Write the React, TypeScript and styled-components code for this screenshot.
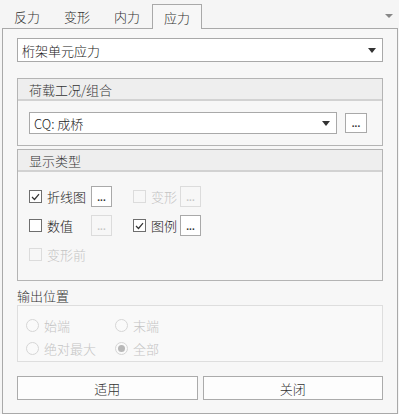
import styled, { createGlobalStyle } from 'styled-components'

const GlobalStyle = createGlobalStyle`
  html, body {
    margin: 0;
    padding: 0;
    background: #f5f5f5;
  }
  body {
    font-family: "Noto Sans CJK SC", "Noto Sans", sans-serif;
    font-size: 13px;
    font-weight: 300;
    color: #333;
  }
`

const Window = styled.div`
  width: 399px;
  height: 414px;
  background: #f5f5f5;
  display: flex;
  flex-direction: column;
  overflow: hidden;
`

const TabBar = styled.div`
  height: 28px;
  display: flex;
  align-items: flex-end;
  padding-left: 2px;
  position: relative;
`

const Tab = styled.div<{ $active?: boolean }>`
  width: 50px;
  height: ${({ $active }) => ($active ? '25px' : '24px')};
  box-sizing: border-box;
  display: flex;
  align-items: center;
  justify-content: center;
  font-size: 13px;
  color: #333;
  margin-bottom: ${({ $active }) => ($active ? '-1px' : '0')};
  background: ${({ $active }) => ($active ? '#f7f7f7' : 'transparent')};
  border: 1px solid ${({ $active }) => ($active ? '#a9a9a9' : 'transparent')};
  border-bottom: none;
  position: relative;
  z-index: 1;
`

const TabMenu = styled.div`
  position: absolute;
  right: 6px;
  top: 14px;
  width: 0;
  height: 0;
  border-left: 4px solid transparent;
  border-right: 4px solid transparent;
  border-top: 4px solid #888;
`

const Panel = styled.div`
  flex: 1;
  margin-left: 2px;
  width: 396px;
  box-sizing: border-box;
  border: 1px solid #a9a9a9;
  background: #f7f7f7;
  padding: 9px 14px;
  display: flex;
  flex-direction: column;
`

const Combo = styled.div<{ $h?: number }>`
  height: ${({ $h }) => $h ?? 24}px;
  box-sizing: border-box;
  border: 1px solid #a9a9a9;
  background: #fff;
  display: flex;
  align-items: center;
  padding: 0 6px 0 4px;
  flex: 1;
`

const ComboText = styled.span`
  flex: 1;
  color: #222;
`

const Caret = styled.span`
  width: 0;
  height: 0;
  border-left: 4px solid transparent;
  border-right: 4px solid transparent;
  border-top: 5px solid #333;
`

const Group = styled.div<{ $top: number }>`
  margin-top: ${({ $top }) => $top}px;
  border: 1px solid #b4b4b4;
  background: #f7f7f7;
`

const GroupHeader = styled.div`
  height: 20px;
  background: #eeeeee;
  border-bottom: 2px solid #d2d2d2;
  display: flex;
  align-items: center;
  padding-left: 11px;
  color: #333;
`

const GroupBody = styled.div<{ $pad: string }>`
  padding: ${({ $pad }) => $pad};
`

const ComboRow = styled.div`
  display: flex;
  align-items: center;
  gap: 8px;
`

const MoreButton = styled.div<{ $w?: number; $h?: number; $disabled?: boolean }>`
  width: ${({ $w }) => $w ?? 21}px;
  height: ${({ $h }) => $h ?? 21}px;
  box-sizing: border-box;
  border: 1px solid ${({ $disabled }) => ($disabled ? '#dcdcdc' : '#a9a9a9')};
  background: ${({ $disabled }) => ($disabled ? '#f7f7f7' : '#fff')};
  color: ${({ $disabled }) => ($disabled ? '#c8c8c8' : '#333')};
  display: flex;
  align-items: center;
  justify-content: center;
  font-family: "Liberation Sans", sans-serif;
  font-size: 10px;
  font-weight: bold;
  line-height: 1;
  padding-top: 2px;
  flex: none;
`

const OptionGrid = styled.div`
  display: grid;
  grid-template-columns: 62px 42px 47px auto;
  grid-auto-rows: 21px;
  row-gap: 8px;
  align-items: center;
`

const Check = styled.label<{ $disabled?: boolean }>`
  display: flex;
  align-items: center;
  gap: 5px;
  color: ${({ $disabled }) => ($disabled ? '#c4c4c4' : '#222')};
  white-space: nowrap;
`

const Box = styled.span<{ $disabled?: boolean }>`
  width: 13px;
  height: 13px;
  box-sizing: border-box;
  border: 1px solid ${({ $disabled }) => ($disabled ? '#dcdcdc' : '#6e6e6e')};
  background: ${({ $disabled }) => ($disabled ? '#f7f7f7' : '#fff')};
  display: flex;
  align-items: center;
  justify-content: center;
  flex: none;
`

const SectionLabel = styled.div`
  margin-top: 5px;
  height: 18px;
  display: flex;
  align-items: center;
  color: #333;
`

const RadioGroup = styled.div`
  margin-top: 1px;
  border: 1px solid #dedede;
  background: #f9f9f9;
  padding: 12px 8px 5px;
  display: grid;
  grid-template-columns: 89px auto;
  grid-auto-rows: 15px;
  row-gap: 8px;
  align-items: center;
`

const Radio = styled.span`
  display: flex;
  align-items: center;
  gap: 5px;
  color: #c4c4c4;
`

const Circle = styled.span<{ $checked?: boolean }>`
  width: 13px;
  height: 13px;
  box-sizing: border-box;
  border-radius: 50%;
  border: 1px solid #d6d6d6;
  background: #fafafa;
  display: flex;
  align-items: center;
  justify-content: center;
  &::after {
    content: '';
    display: ${({ $checked }) => ($checked ? 'block' : 'none')};
    width: 7px;
    height: 7px;
    border-radius: 50%;
    background: #b8b8b8;
  }
`

const ButtonRow = styled.div`
  margin-top: 14px;
  display: grid;
  grid-template-columns: 1fr 1fr;
  column-gap: 5px;
`

const Button = styled.div`
  height: 24px;
  box-sizing: border-box;
  border: 1px solid #ababab;
  background: #fdfdfd;
  display: flex;
  align-items: center;
  justify-content: center;
  color: #333;
`

function CheckMark() {
  return (
    <svg width="9" height="8" viewBox="0 0 9 8">
      <path d="M1 4 L3.5 6.5 L8 1.2" fill="none" stroke="#333" strokeWidth="1.2" />
    </svg>
  )
}

function CheckItem({ label, checked, disabled }: { label: string; checked?: boolean; disabled?: boolean }) {
  return (
    <Check $disabled={disabled}>
      <Box $disabled={disabled}>{checked && <CheckMark />}</Box>
      {label}
    </Check>
  )
}

export default function App() {
  return (
    <Window>
      <GlobalStyle />
      <TabBar>
        <Tab>反力</Tab>
        <Tab>变形</Tab>
        <Tab>内力</Tab>
        <Tab $active>应力</Tab>
        <TabMenu />
      </TabBar>
      <Panel>
        <Combo style={{ flex: 'none' }}>
          <ComboText>桁架单元应力</ComboText>
          <Caret />
        </Combo>

        <Group $top={16}>
          <GroupHeader>荷载工况/组合</GroupHeader>
          <GroupBody $pad="11px 15px 11px 11px">
            <ComboRow>
              <Combo $h={22}>
                <ComboText>CQ: 成桥</ComboText>
                <Caret />
              </Combo>
              <MoreButton $w={22} $h={20}>...</MoreButton>
            </ComboRow>
          </GroupBody>
        </Group>

        <Group $top={3}>
          <GroupHeader>显示类型</GroupHeader>
          <GroupBody $pad="14px 11px 15px 11px">
            <OptionGrid>
              <CheckItem label="折线图" checked />
              <MoreButton>...</MoreButton>
              <CheckItem label="变形" disabled />
              <MoreButton $disabled>...</MoreButton>
              <CheckItem label="数值" />
              <MoreButton $disabled>...</MoreButton>
              <CheckItem label="图例" checked />
              <MoreButton>...</MoreButton>
              <CheckItem label="变形前" disabled />
            </OptionGrid>
          </GroupBody>
        </Group>

        <SectionLabel>输出位置</SectionLabel>
        <RadioGroup>
          <Radio><Circle />始端</Radio>
          <Radio><Circle />末端</Radio>
          <Radio><Circle />绝对最大</Radio>
          <Radio><Circle $checked />全部</Radio>
        </RadioGroup>

        <ButtonRow>
          <Button>适用</Button>
          <Button>关闭</Button>
        </ButtonRow>
      </Panel>
    </Window>
  )
}
